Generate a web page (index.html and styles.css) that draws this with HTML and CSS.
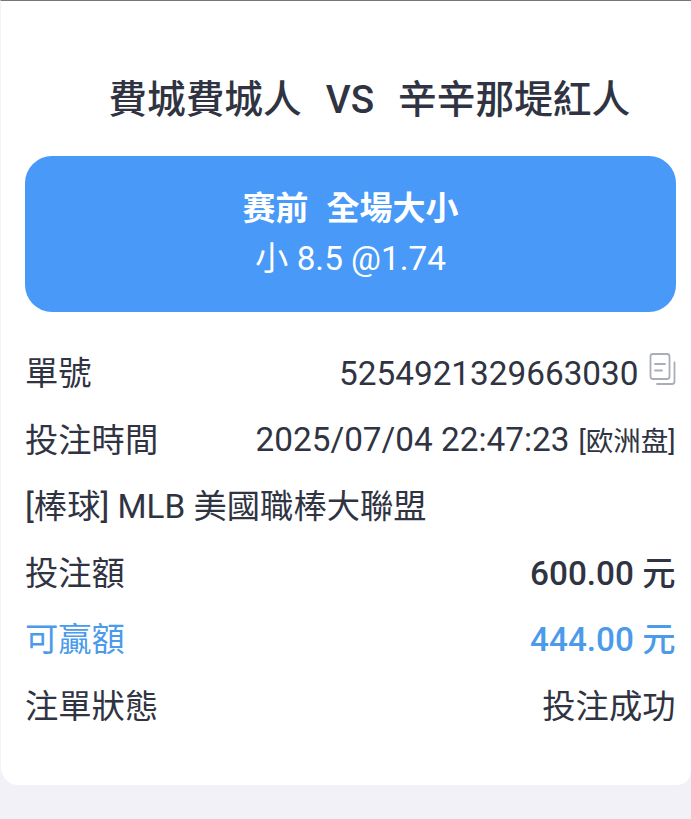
FILE: index.html
```html
<!DOCTYPE html>
<html lang="zh-Hant">
<head>
<meta charset="utf-8">
<title>注單</title>
<link rel="stylesheet" href="styles.css">
</head>
<body>
<main class="ticket">
  <h1 class="match"><span>費城費城人</span><span class="vs">VS</span><span>辛辛那堤紅人</span></h1>
  <section class="pick">
    <div class="market"><span>赛前</span><span>全場大小</span></div>
    <div class="odds">小 8.5 @1.74</div>
  </section>
  <dl class="details">
    <div class="row"><dt>單號</dt><dd class="order"><span class="num">5254921329663030</span><svg class="copy" viewBox="0 0 28 34" width="28" height="34"><path d="M4 2h14a2.500 2.500 0 0 1 2.500 2.500v20a2.500 2.500 0 0 1-2.500 2.500H4a2.500 2.500 0 0 1-2.500-2.500v-20A2.500 2.500 0 0 1 4 2z"/><path d="M25.500 10.500v19a2.500 2.500 0 0 1-2.500 2.500H8"/><path d="M6 12h10M6 18.500h7"/></svg></dd></div>
    <div class="row"><dt>投注時間</dt><dd><span class="time">2025/07/04 22:47:23</span><small class="zone">[欧洲盘]</small></dd></div>
    <div class="row"><dt class="league">[棒球] MLB 美國職棒大聯盟</dt></div>
    <div class="row"><dt>投注額</dt><dd class="amount">600.00 元</dd></div>
    <div class="row win"><dt>可贏額</dt><dd class="amount">444.00 元</dd></div>
    <div class="row"><dt>注單狀態</dt><dd>投注成功</dd></div>
  </dl>
</main>
</body>
</html>
```

FILE: styles.css
```css
* { box-sizing: border-box; }
body { margin: 0; height: 819px; overflow: hidden; background: #f1f1f7; color: #303442; font-family: Roboto, "Noto Sans CJK TC", sans-serif; font-size: 33.3px; }
.ticket { height: 785px; padding: 69px 15.5px 0 24px; background: #fff; border-top: 1px solid #777; border-left: 1px solid #f4f4f7; border-radius: 0 0 14px 18px; }
.match { display: flex; justify-content: center; gap: 24px; margin: 0 0 26.4px 38px; height: 60px; line-height: 60px; font-size: 38.7px; font-weight: 500; white-space: nowrap; }
.pick { height: 156px; margin-right: -0.5px; padding-top: 28px; border-radius: 27px; background: #4899f8; color: #fff; text-align: center; line-height: 50px; }
.market { display: flex; justify-content: center; gap: 18px; height: 50px; font-size: 33px; font-weight: 700; }
.odds { height: 50px; }
.details { margin: 28.4px 0 0; }
.row { display: flex; justify-content: space-between; align-items: center; height: 66.6px; line-height: 50px; white-space: nowrap; }
dd { display: flex; align-items: baseline; margin: 0; }
.order { align-items: center; gap: 10px; margin: -1px -1px 0 0; }
.copy { fill: none; stroke: #a9adb9; stroke-width: 1.8; stroke-linecap: round; margin-top: -10px; }
.zone { font-size: 27.5px; margin-left: 9px; }
.amount { font-weight: 500; }
.win { color: #4b9bea; }
```
